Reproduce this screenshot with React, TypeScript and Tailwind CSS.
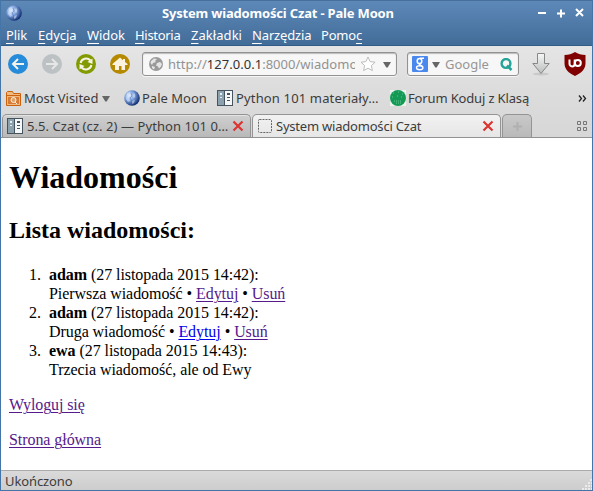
import type { ReactNode } from "react";

const menuItems = [
  { key: "P", rest: "lik", box: "w-8 tracking-[-0.1px]" },
  { key: "E", rest: "dycja", box: "w-[49px] tracking-[-0.05px]" },
  { key: "W", rest: "idok", box: "w-12 tracking-[-0.1px]" },
  { key: "H", rest: "istoria", box: "w-14 tracking-[-0.3px]" },
  { key: "Z", rest: "akładki", box: "w-[61px] tracking-[0.05px]" },
  { key: "N", rest: "arzędzia", box: "w-[69px] tracking-[-0.15px]" },
];

function Moon({ className }: { className: string }) {
  return (
    <svg viewBox="0 0 16 16" className={className}>
      <defs>
        <radialGradient id="moon" cx="34%" cy="35%" r="70%">
          <stop offset="0" stopColor="#d9e7fb" />
          <stop offset=".45" stopColor="#7fa3dd" />
          <stop offset="1" stopColor="#0c2a6d" />
        </radialGradient>
      </defs>
      <circle cx="8" cy="8" r="7.8" fill="url(#moon)" />
      <path d="M3 3l3-1 1 3-2 2 1 4-2 1-2-3zM9 4l2-1 1 3-2 2-1-1zM8 11l3-1-1 3-2 1z" fill="#e3eefc" opacity=".5" />
      <path d="M7 3l1 3-2 2 2 3-1 3M11 3l1 4" stroke="#315aa6" fill="none" opacity=".4" />
    </svg>
  );
}

function Book() {
  return (
    <svg viewBox="0 0 16 16" className="h-4 w-4 shrink-0">
      <path d="M0 0h16v16H0z" fill="#45545e" />
      <path d="M1 1h6v14H1z" fill="#8ca1ae" />
      <path d="M8 1h7v14H8z" fill="#f5f7f8" />
      <path d="M3 3h2v2H3zM3 7h2v1H3z" fill="#e8eef2" />
      <path d="M10 3h3v2h-3zM10 7h3v1h-3zM10 10h3v1h-3z" fill="#45545e" />
    </svg>
  );
}

function Cross() {
  return (
    <svg viewBox="0 0 12 12" className="h-3 w-3 shrink-0">
      <path d="M1.500 1.500l9 9M10.500 1.500l-9 9" stroke="#dc3430" strokeWidth="2.2" />
    </svg>
  );
}

function Round({ color, children }: { color: string; children: ReactNode }) {
  return (
    <svg viewBox="0 0 20 20" className="h-5 w-5 shrink-0">
      <circle cx="10" cy="10" r="10" fill={color} />
      {children}
    </svg>
  );
}

function Arrow({ className }: { className: string }) {
  return (
    <svg viewBox="0 0 8 6" className={className}>
      <path d="M0 0h8L4.700 5.500H3.300z" fill="#666" />
    </svg>
  );
}

function Toolbar() {
  return (
    <div className="flex h-9 items-center pl-[7px]">
      <Round color="#268bd8">
        <path d="M16 10H5M10 5l-5 5 5 5" fill="none" stroke="#f5f3e9" strokeWidth="2" />
      </Round>
      <div className="w-[14px]" />
      <Round color="#bcc1c3">
        <path d="M4 10h11M10 5l5 5-5 5" fill="none" stroke="#e6e7e7" strokeWidth="2" />
      </Round>
      <div className="w-[14px]" />
      <Round color="#839b00">
        <path d="M4.600 9a5.600 5.200 0 0 1 9.800-2.500M15.400 11a5.600 5.200 0 0 1-9.800 2.500" fill="none" stroke="#f7f4e6" strokeWidth="2" />
        <path d="M16.500 4.500V10l-5-2zM3.500 15.500V10l5 2z" fill="#f7f4e6" />
      </Round>
      <div className="w-[14px]" />
      <Round color="#b58900">
        <path d="M10 3.500L2.500 10v1H5v5h4v-4h2.500v4H15v-5h2.500v-1L15 8V5h-2v1.300z" fill="#fbf3df" />
      </Round>
      <div className="w-3" />
      <div className="flex h-6 w-[255px] items-center rounded-[3px] border border-[#929292] bg-[#f7f7f7] pl-1.5 shadow-[inset_0_1px_1px_#bbb,0_1px_0_#f5f5f5]">
        <svg viewBox="0 0 14 14" className="h-[14px] w-[14px] shrink-0">
          <circle cx="7" cy="7" r="7" fill="#9a9a9a" />
          <path d="M2 4l3-2.500 3 .5-2 2 1 1-3 1-1 2-1.500-2zM8 6l3-1 2 2-1 2.500-2 2-1-2-2-1zM3 9l3 1-1 2.500-2-1.500z" fill="#e5e5e5" />
        </svg>
        <div className="ml-[5px] w-[187px] overflow-hidden whitespace-nowrap text-[13px] leading-5 tracking-[0.03px] text-[#929292]">
          http://<span className="text-[#333]">127.0.0.1</span>:8000/wiadomo
        </div>
        <svg viewBox="0 0 16 16" className="ml-[5px] h-4 w-4 shrink-0">
          <path d="M8 1l2.100 4.600 5 .6-3.700 3.400 1 5L8 12.200 3.600 14.600l1-5L1 6.200l4.900-.6z" fill="#fff" stroke="#bdbdbd" />
        </svg>
        <Arrow className="ml-[7px] mt-0.5 h-[6px] w-2" />
      </div>
      <div className="ml-[10px] flex h-6 w-[112px] items-center rounded-[3px] border border-[#929292] bg-[#f7f7f7] pl-1 shadow-[inset_0_1px_1px_#bbb,0_1px_0_#f5f5f5]">
        <svg viewBox="0 0 16 16" className="h-4 w-4 shrink-0">
          <rect width="16" height="16" rx="1" fill="#4a88ee" />
          <ellipse cx="7.500" cy="5" rx="2.300" ry="2.600" fill="none" stroke="#fff" strokeWidth="1.500" />
          <path d="M8 2.200h4M8.500 7.400c-3 1 1.500 2 2.200 3.500" fill="none" stroke="#fff" strokeWidth="1.400" />
          <ellipse cx="7.700" cy="11.800" rx="3.200" ry="2" fill="none" stroke="#fff" strokeWidth="1.400" />
        </svg>
        <Arrow className="ml-1 mt-0.5 h-[6px] w-2" />
        <span className="ml-[5px] w-[46px] text-[13px] leading-5 text-[#969696]">Google</span>
        <svg viewBox="0 0 13 13" className="ml-[9px] h-[13px] w-[13px] shrink-0">
          <circle cx="6" cy="5.500" r="4.400" fill="none" stroke="#24a397" strokeWidth="2.400" />
          <path d="M7 7.500l4.500 4.500" stroke="#24a397" strokeWidth="2.600" />
        </svg>
      </div>
      <svg viewBox="0 0 20 24" className="ml-[12px] h-6 w-5 shrink-0">
        <defs>
          <linearGradient id="down" x2="0" y2="1">
            <stop stopColor="#f7f7f7" />
            <stop offset="1" stopColor="#b9bdbb" />
          </linearGradient>
        </defs>
        <ellipse cx="10" cy="22" rx="8" ry="1.500" fill="#b9b9b9" opacity=".6" />
        <path d="M6.500 1.500h7v10h4.700L10 21.500l-8.200-10h4.700z" fill="url(#down)" stroke="#858886" />
      </svg>
      <svg viewBox="0 0 22 24" className="ml-[13px] h-6 w-[22px] shrink-0">
        <path d="M11 0c3 2 6.500 3 10.500 3v8c0 6-4 10-10.500 13C4.500 21 .5 17 .5 11V3C4.500 3 8 2 11 0z" fill="#800000" />
        <path d="M5.500 7.500v4.300a2.600 2.600 0 0 0 5.200 0V7.500" fill="none" stroke="#fff" strokeWidth="2" />
        <circle cx="13.800" cy="11" r="3" fill="none" stroke="#fff" strokeWidth="2" />
      </svg>
    </div>
  );
}

function Bookmarks() {
  return (
    <div className="flex h-8 items-center whitespace-nowrap pl-[5px] text-[13px] leading-5 text-[#3b3b3b]">
      <svg viewBox="0 0 15 15" className="h-[15px] w-[15px] shrink-0">
        <path d="M.5 1.500l1-1h5l1 2h7v12H.5z" fill="#edba83" stroke="#ce610b" />
        <path d="M1 4.500h13" stroke="#ce610b" />
        <path d="M2 6h11v7H2z" fill="#d77b34" />
        <circle cx="7.500" cy="9" r="2.500" fill="#dfa26a" stroke="#fff0df" />
        <path d="M9 11l2 2" stroke="#fff0df" />
      </svg>
      <span className="ml-[3px] w-[77px] tracking-[-0.03px]">Most Visited</span>
      <Arrow className="ml-px mt-px h-[6px] w-2" />
      <Moon className="ml-[14px] h-4 w-4 shrink-0" />
      <span className="ml-[2px] w-[75px]">Pale Moon</span>
      <Book />
      <span className="ml-[3px] w-[154px] tracking-[0.15px]">Python 101 materiały…</span>
      <svg viewBox="0 0 16 16" className="h-4 w-4 shrink-0">
        <path d="M0 0h16v16H0z" fill="#eff3f0" />
        <circle cx="8" cy="8" r="8" fill="#149a54" />
        <path d="M3 3h2M8 2h2M12 4h1M2 7h2M7 6h1M11 7h2M4 11h7M6 13h5" stroke="#69c594" strokeDasharray="1 1" />
      </svg>
      <span className="ml-[2px] w-[170px] tracking-[-0.15px]">Forum Koduj z Klasą</span>
      <svg viewBox="0 0 9 7" className="h-[7px] w-[9px]">
        <path d="M1 .5l2.500 3-2.500 3M5 .5l2.500 3-2.500 3" fill="none" stroke="#222" strokeWidth="1.300" />
      </svg>
    </div>
  );
}

function Tabs() {
  return (
    <div className="flex h-6 items-start gap-0.5 whitespace-nowrap border-b border-[#929292] pl-px text-[13px] leading-5 text-[#3c3c3c]">
      <div className="flex h-[23px] w-[249px] items-center rounded-t-[5px] border border-b-0 border-[#949494] bg-linear-to-b from-[#cfcfcf] to-[#b9b9b9] pl-1 shadow-[inset_0_1px_0_#e3e3e3]">
        <Book />
        <span className="ml-[4px] w-[205px] tracking-[0.07px]">5.5. Czat (cz. 2) — Python 101 0…</span>
        <Cross />
      </div>
      <div className="-ml-px flex h-[23px] w-[249px] items-center rounded-t-[5px] border border-b-0 border-[#949494] bg-linear-to-b from-[#f2f2f2] to-[#e6e6e6] pl-[5px]">
        <svg viewBox="0 0 14 14" className="h-[14px] w-[14px] shrink-0">
          <rect x=".5" y=".5" width="13" height="13" rx="1" fill="none" stroke="#666" strokeDasharray="2 1" />
        </svg>
        <span className="ml-1 w-[206px] tracking-[-0.21px]">System wiadomości Czat</span>
        <Cross />
      </div>
      <div className="-ml-px flex h-[23px] w-[30px] items-center justify-center rounded-t-[5px] border border-b-0 border-[#949494] bg-linear-to-b from-[#c9c9c9] to-[#b9b9b9]">
        <svg viewBox="0 0 11 11" className="h-[11px] w-[11px]">
          <path d="M5.500 1v9M1 5.500h9" stroke="#b0b0b0" strokeWidth="2" />
        </svg>
      </div>
      <svg viewBox="0 0 11 10" className="ml-auto mr-1 mt-[7px] h-[10px] w-[11px]">
        <path d="M.5.5h3v3h-3zM6.500.5h3v3h-3zM.5 6.500h3v3h-3zM6.500 6.500h3v3h-3z" fill="none" stroke="#777" />
      </svg>
    </div>
  );
}

function PageLink({ unread = false, children }: { unread?: boolean; children: ReactNode }) {
  return (
    <a href="#" className={`underline decoration-1 underline-offset-2 ${unread ? "text-[#0000ee]" : "text-[#551a8b]"}`}>
      {children}
    </a>
  );
}

function Message({ number, author, date, children }: { number: number; author: string; date: string; children: ReactNode }) {
  return (
    <li className="flex">
      <span className="w-5 shrink-0">{number}.</span>
      <div>
        <b>{author}</b> ({date}):
        <br />
        {children}
      </div>
    </li>
  );
}

export default function App() {
  return (
    <div className="flex h-[491px] w-[593px] flex-col overflow-hidden border border-t-0 border-[#4475a8] bg-[#dcdcdc] font-['Noto_Sans','Open_Sans',sans-serif]">
      <header className="h-[46px] shrink-0 border-b border-t border-[#315b88] border-t-[#486f9b] bg-linear-to-b from-[#5d89b9] to-[#426c98] text-white">
        <div className="flex h-6 items-center pl-[5px]">
          <Moon className="h-4 w-4 shrink-0" />
          <h1 className="ml-[140px] w-[374px] whitespace-nowrap text-[13px] font-bold leading-5 tracking-[-0.18px]">
            System wiadomości Czat - Pale Moon
          </h1>
          <svg viewBox="0 0 48 12" className="h-3 w-12 shrink-0">
            <path d="M2 6h8M21 6.500h8M25 2.500v8M40 2l7 7M47 2l-7 7" stroke="#fff" strokeWidth="2" />
          </svg>
        </div>
        <nav className="flex h-5 items-center whitespace-nowrap pl-[5px] text-[13px] leading-5">
          {menuItems.map((item) => (
            <span key={item.key} className={item.box}>
              <u className="decoration-1 underline-offset-[3px]">{item.key}</u>
              {item.rest}
            </span>
          ))}
          <span className="tracking-[-0.2px]">Pomo<u className="decoration-1 underline-offset-[3px]">c</u></span>
        </nav>
      </header>
      <div className="h-[92px] shrink-0 bg-linear-to-b from-[#e5e5e5] via-[#dcdcdc] to-[#d7d7d7]">
        <Toolbar />
        <Bookmarks />
        <Tabs />
      </div>
      <main className="h-[332px] shrink-0 bg-white pl-2 font-['Liberation_Serif',serif] text-base leading-[19px] text-black">
        <h1 className="pt-[21px] text-[32px] font-bold leading-[37px]">Wiadomości</h1>
        <h2 className="mt-[21px] text-2xl font-bold leading-[27px]">Lista wiadomości:</h2>
        <ol className="mt-[21px] pl-5 tracking-[-0.06px]">
          <Message number={1} author="adam" date="27 listopada 2015 14:42">
            Pierwsza wiadomość • <PageLink>Edytuj</PageLink> • <PageLink>Usuń</PageLink>
          </Message>
          <Message number={2} author="adam" date="27 listopada 2015 14:42">
            Druga wiadomość • <PageLink unread>Edytuj</PageLink> • <PageLink>Usuń</PageLink>
          </Message>
          <Message number={3} author="ewa" date="27 listopada 2015 14:43">
            Trzecia wiadomość, ale od Ewy
          </Message>
        </ol>
        <p className="mt-4 tracking-[-0.1px]"><PageLink>Wyloguj się</PageLink></p>
        <p className="mt-4 tracking-[-0.06px]"><PageLink>Strona główna</PageLink></p>
      </main>
      <footer className="flex h-5 shrink-0 items-center justify-between border-t border-[#aaa] bg-linear-to-b from-[#dadada] to-[#cdcdcd] pl-1 text-[13px] leading-5 tracking-[-0.1px] text-[#3c3c3c]">
        <span>Ukończono</span>
        <svg viewBox="0 0 11 11" className="h-[11px] w-[11px] self-end">
          <path d="M9 1h2M7 4h4M4 7h7M1 10h10" stroke="#ebebeb" strokeWidth="2" strokeDasharray="2 1" />
        </svg>
      </footer>
    </div>
  );
}
